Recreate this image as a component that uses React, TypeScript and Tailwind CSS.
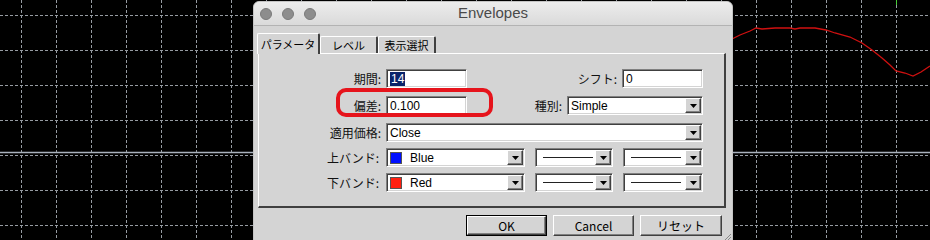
import React from 'react';

const jp = { fontFamily: '"Noto Sans CJK JP", "Liberation Sans", sans-serif' };
const latin = { fontFamily: '"Liberation Sans", "Noto Sans CJK JP", sans-serif' };

const sunken =
  'bg-white border border-t-[#808080] border-l-[#808080] border-b-white border-r-white shadow-[inset_1px_1px_0_#404040,inset_-1px_-1px_0_#d4d4d4]';
const raised =
  'bg-[#d4d4d4] border border-t-white border-l-white border-b-[#404040] border-r-[#404040] shadow-[inset_-1px_-1px_0_#808080]';

const ChartBackground = () => {
  const vx = Array.from({ length: 26 }, (_, i) => 21 + i * 35);
  const hy = [15, 50, 85, 120, 155, 190, 225];
  const red =
    '730,40 740,35 750,31 756,28 762,29 775,28 790,28 795,29 800,28 815,28 826,30 835,33 850,37 862,43 872,50 882,58 890,65 896,71 905,73 913,76 921,72 930,66';
  return (
    <svg className="absolute inset-0" width={930} height={240} viewBox="0 0 930 240">
      <rect width={930} height={240} fill="#000" />
      {vx.map((x) => (
        <line key={x} x1={x + 0.5} y1={0} x2={x + 0.5} y2={240} stroke="#969ba2" strokeDasharray="3 2" />
      ))}
      {hy.map((y) => (
        <line key={y} x1={0} y1={y + 0.5} x2={930} y2={y + 0.5} stroke="#969ba2" strokeDasharray="3 2" />
      ))}
      <line x1={0} y1={152.5} x2={930} y2={152.5} stroke="#a9b1bd" strokeWidth={1.5} />
      <polyline points={red} fill="none" stroke="#d01010" strokeWidth={1.3} />
      <line x1={896.5} y1={0} x2={896.5} y2={5} stroke="#44cc33" />
    </svg>
  );
};

const Arrow = () => (
  <div className={`${raised} w-[16px] h-[15px] flex items-center justify-center shrink-0`}>
    <svg width={7} height={4} viewBox="0 0 7 4">
      <polygon points="0,0 7,0 3.5,4" fill="#000" />
    </svg>
  </div>
);

const Field = ({ w, children }: { w: string; children?: React.ReactNode }) => (
  <div className={`${sunken} ${w} h-[19px] flex items-center px-[3px] text-[12px] text-black`} style={latin}>
    {children}
  </div>
);

const Select = ({ w, children }: { w: string; children?: React.ReactNode }) => (
  <div className={`${sunken} ${w} h-[19px] flex items-center pl-[3px] pr-[1px] text-[12px] text-black`} style={latin}>
    <div className="flex-1 flex items-center min-w-0">{children}</div>
    <Arrow />
  </div>
);

const Label = ({ w, children }: { w: string; children: React.ReactNode }) => (
  <div className={`${w} text-right text-[12px] text-[#111] leading-none`} style={jp}>
    {children}
  </div>
);

const LineSample = () => <div className="w-[50px] h-[1.5px] bg-[#222] ml-[4px]" />;

const Swatch = ({ color }: { color: string }) => (
  <div className="w-[12px] h-[12px] border border-[#555] mr-[8px]" style={{ backgroundColor: color }} />
);

const Tab = ({ label, active }: { label: string; active?: boolean }) => (
  <div
    className={
      active
        ? 'relative z-10 w-[63px] h-[21px] -mb-[1px] bg-[#d4d4d4] border-t border-l border-white border-r-2 border-r-[#404040] rounded-t-[2px] flex items-center justify-center text-[11px]'
        : 'w-[58px] h-[17px] bg-[#d4d4d4] border-t border-l border-white border-r-2 border-r-[#404040] rounded-t-[2px] flex items-center justify-center text-[11px]'
    }
    style={jp}
  >
    {label}
  </div>
);

const Button = ({ w, label, primary }: { w: string; label: string; primary?: boolean }) => (
  <div
    className={`${w} h-[21px] flex items-center justify-center text-[12px] text-black ${
      primary ? 'border border-black' : ''
    }`}
    style={jp}
  >
    <div className={`${raised} w-full h-full flex items-center justify-center`}>{label}</div>
  </div>
);

const Dialog = () => (
  <div className="absolute left-[253px] top-[1px] w-[480px] h-[250px] rounded-t-[6px] bg-[#d4d4d4] border border-[#c4c4c4] overflow-hidden">
    {/* title bar */}
    <div className="relative h-[24px] bg-gradient-to-b from-[#ececec] to-[#dadada] border-b border-[#b3b3b3] flex items-center">
      <div className="flex gap-[10px] pl-[6px]">
        <div className="w-[12px] h-[12px] rounded-full bg-[#8d8d8d] border border-[#7a7a7a]" />
        <div className="w-[12px] h-[12px] rounded-full bg-[#8d8d8d] border border-[#7a7a7a]" />
        <div className="w-[12px] h-[12px] rounded-full bg-[#8d8d8d] border border-[#7a7a7a]" />
      </div>
      <div className="absolute inset-0 flex items-center justify-center text-[15px] text-[#4a4a4a]" style={latin}>
        Envelopes
      </div>
    </div>

    <div className="pl-[3px] pt-[7px]">
      {/* tabs */}
      <div className="flex items-end h-[20px]">
        <Tab label="パラメータ" active />
        <Tab label="レベル" />
        <Tab label="表示選択" />
      </div>

      {/* panel */}
      <div className="ml-[1px] w-[468px] h-[155px] border-t border-l border-white border-r-2 border-b-2 border-r-[#404040] border-b-[#404040] pt-[15px] flex flex-col">
        <div className="flex items-center gap-[5px]">
          <Label w="w-[122px]">期間:</Label>
          <Field w="w-[81px]">
            <span className="bg-[#0a246a] text-white px-[1px] leading-[14px]">14</span>
          </Field>
          <Label w="w-[145px]">シフト:</Label>
          <Field w="w-[81px]">0</Field>
        </div>
        <div className="flex items-center gap-[5px] mt-[8px]">
          <Label w="w-[122px]">偏差:</Label>
          <Field w="w-[81px]">0.100</Field>
          <Label w="w-[90px]">種別:</Label>
          <Select w="w-[136px]">Simple</Select>
        </div>
        <div className="flex items-center gap-[5px] mt-[8px]">
          <Label w="w-[122px]">適用価格:</Label>
          <Select w="w-[317px]">Close</Select>
        </div>
        <div className="flex items-center gap-[5px] mt-[6px]">
          <Label w="w-[120px] mr-[2px]">上バンド:</Label>
          <Select w="w-[139px]">
            <Swatch color="#0010ff" />
            Blue
          </Select>
          <div className="ml-[5px]">
            <Select w="w-[78px]">
              <LineSample />
            </Select>
          </div>
          <div className="ml-[5px]">
            <Select w="w-[80px]">
              <LineSample />
            </Select>
          </div>
        </div>
        <div className="flex items-center gap-[5px] mt-[6px]">
          <Label w="w-[120px] mr-[2px]">下バンド:</Label>
          <Select w="w-[139px]">
            <Swatch color="#ff2010" />
            Red
          </Select>
          <div className="ml-[5px]">
            <Select w="w-[78px]">
              <LineSample />
            </Select>
          </div>
          <div className="ml-[5px]">
            <Select w="w-[80px]">
              <LineSample />
            </Select>
          </div>
        </div>
      </div>

      {/* buttons */}
      <div className="flex justify-end gap-[6px] mt-[7px] pr-[10px]">
        <Button w="w-[81px]" label="OK" primary />
        <Button w="w-[81px]" label="Cancel" />
        <Button w="w-[82px]" label="リセット" />
      </div>
    </div>

    {/* resize grip */}
    <svg className="absolute right-[1px] top-[230px]" width={9} height={9} viewBox="0 0 9 9">
      <line x1={2} y1={9} x2={9} y2={2} stroke="#888" />
      <line x1={5} y1={9} x2={9} y2={5} stroke="#888" />
    </svg>
  </div>
);

export default function App() {
  return (
    <div className="relative w-[930px] h-[240px] overflow-hidden bg-black">
      <ChartBackground />
      <Dialog />
      {/* red annotation around 偏差 row */}
      <div className="absolute left-[336px] top-[88px] w-[157px] h-[29px] rounded-[10px] border-[4px] border-[#e6141c]" />
    </div>
  );
}
